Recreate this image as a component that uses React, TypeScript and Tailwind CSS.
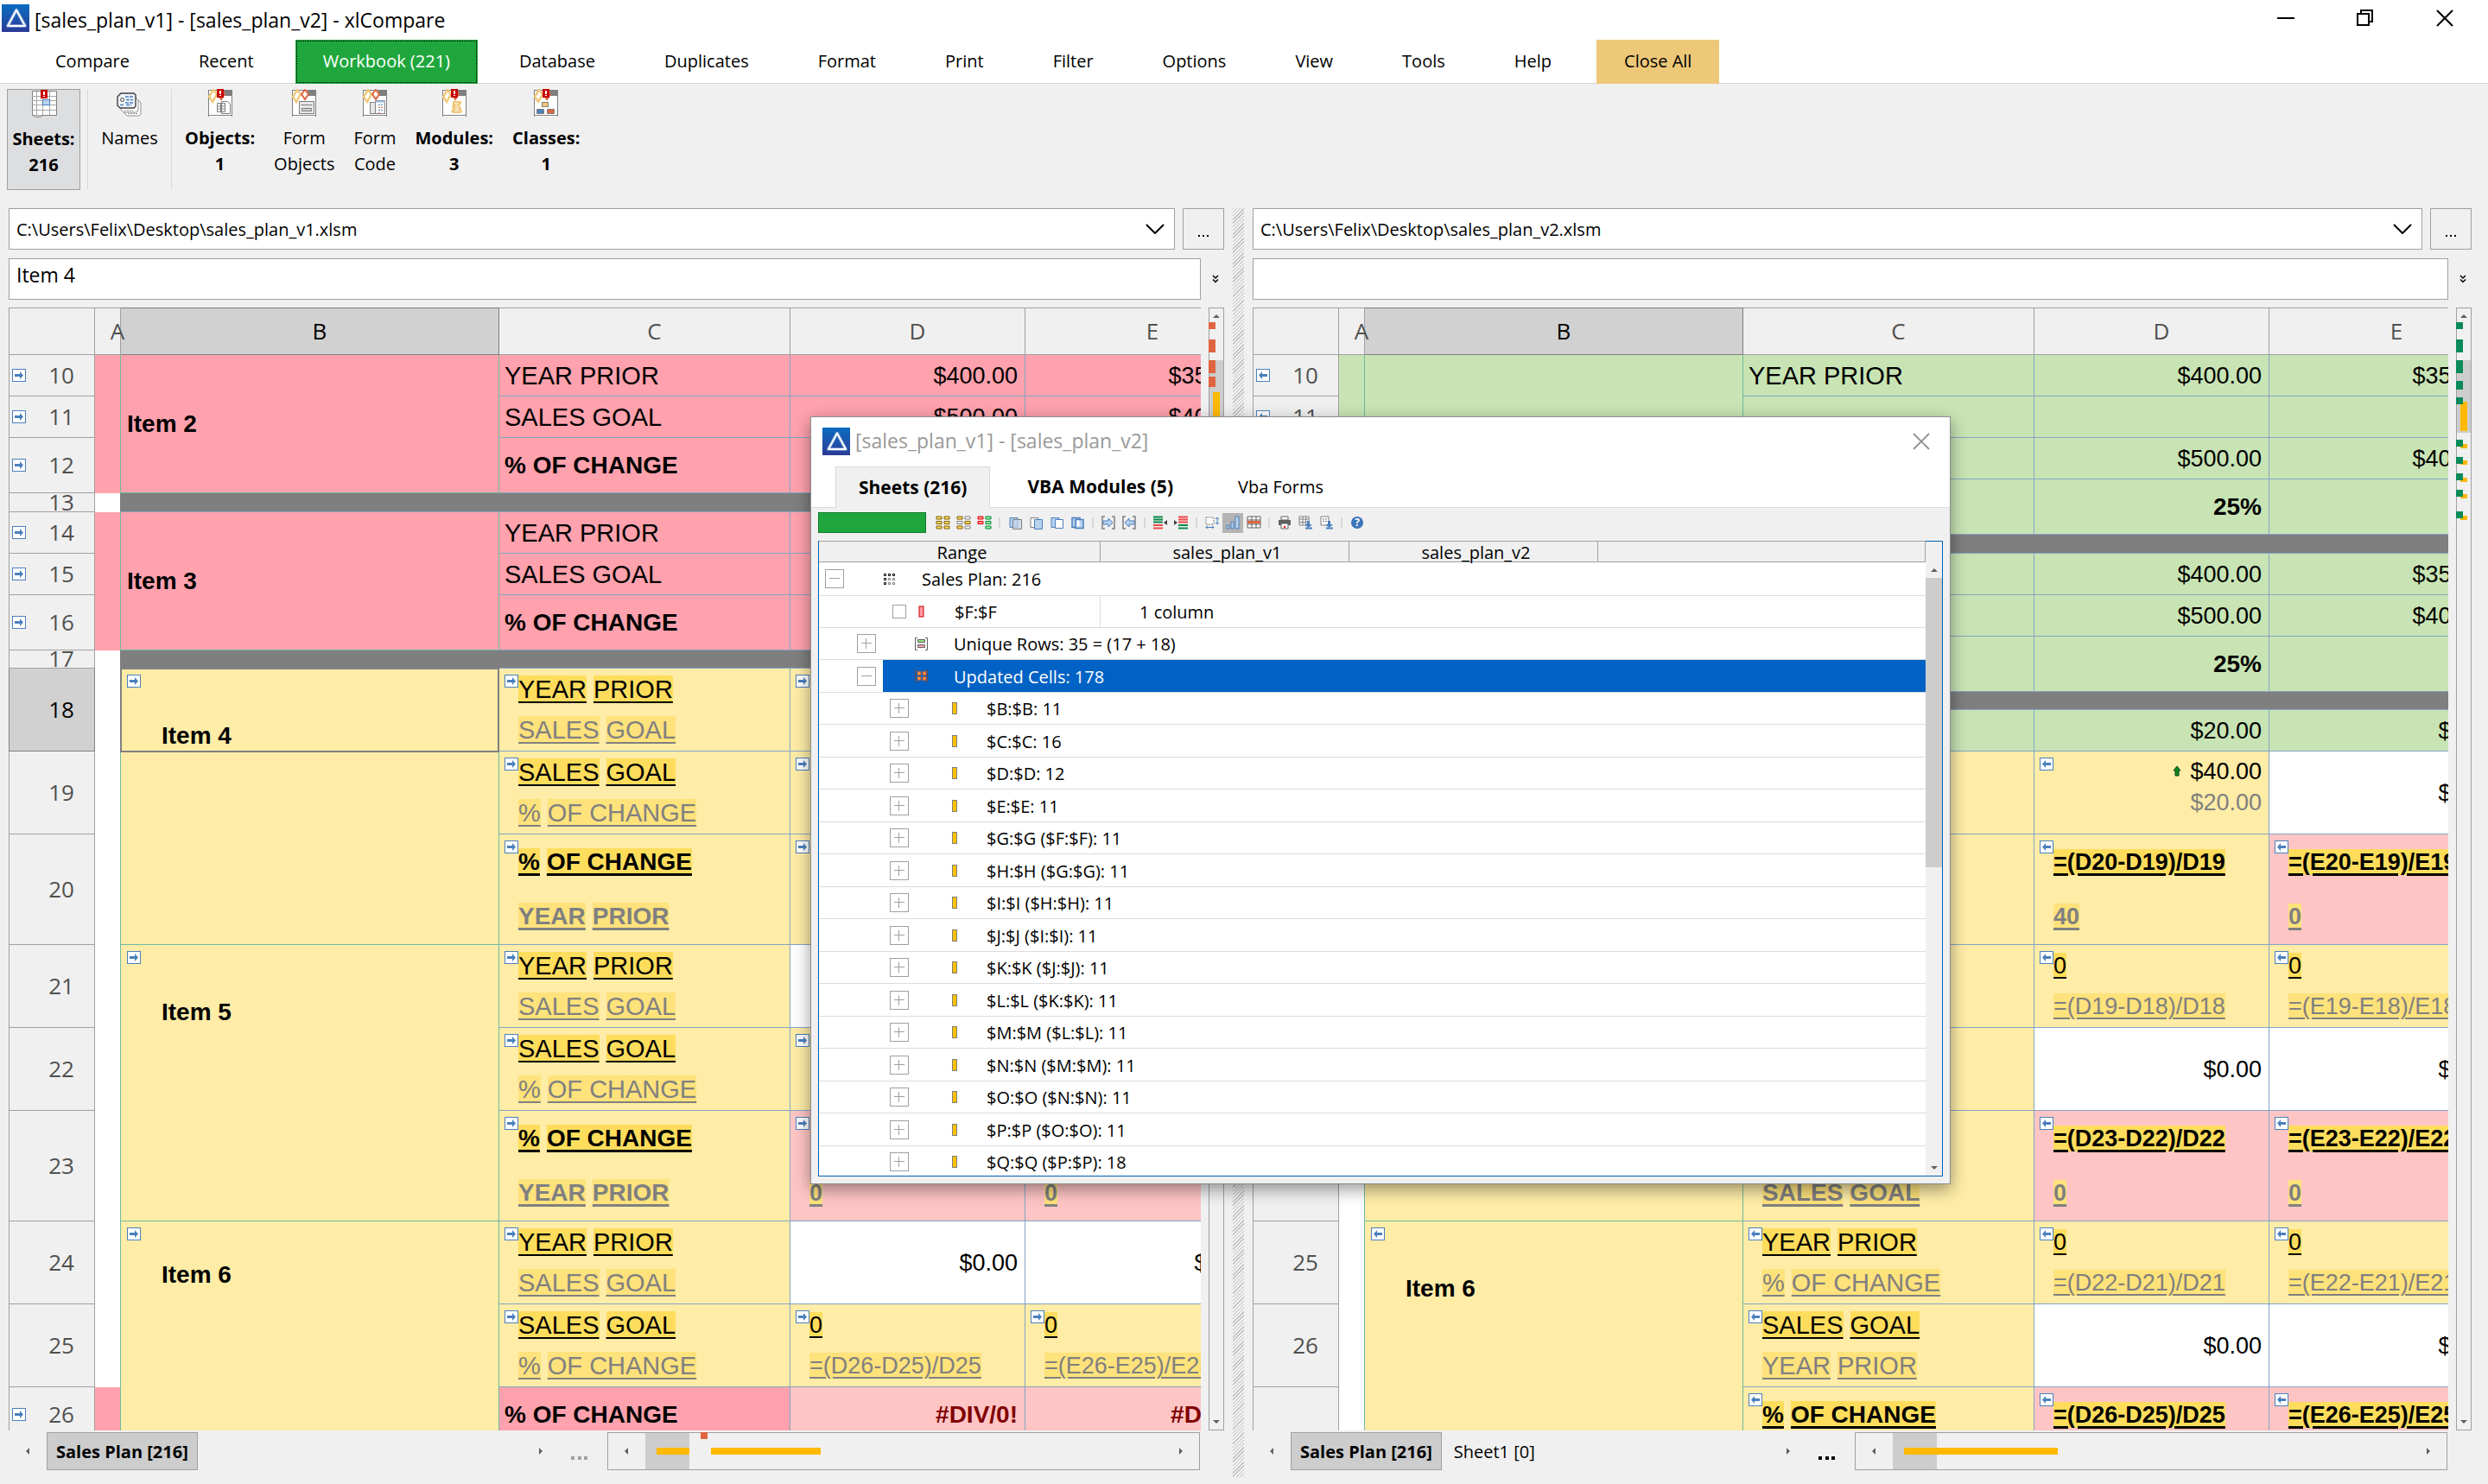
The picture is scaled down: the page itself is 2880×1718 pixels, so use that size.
import React, { useState } from 'react';
import clsx from 'clsx';

type Fill = 'pink' | 'rose' | 'yellow' | 'green' | 'white' | 'gray';
type Side = 'left' | 'right';

interface Cell {
  bg: Fill;
  text?: string;
  old?: string;
  diff?: boolean;
  bold?: boolean;
  error?: boolean;
  trend?: boolean;
}

interface MergedCell {
  bg: Fill;
  rows: number;
  text?: string;
  indent?: 'middle' | 'short' | 'long';
  mark?: boolean;
  selected?: boolean;
}

interface Row {
  id: number;
  size: 's' | 'm' | 'l' | 'xl' | 'bar' | 'thin';
  a: Fill;
  marked?: boolean;
  active?: boolean;
  b?: MergedCell;
  cells?: Cell[];
}

const FILL: Record<Fill, string> = {
  pink: 'bg-[#ffa2ad]',
  rose: 'bg-[#ffc5c5]',
  yellow: 'bg-[#feeca7]',
  green: 'bg-[#c8e4b4]',
  white: 'bg-white',
  gray: 'bg-[#7f7f7f]',
};

const ROW_SIZE: Record<Row['size'], string> = {
  s: 'h-[48px]',
  m: 'h-[64px]',
  l: 'h-[96px]',
  xl: 'h-[128px]',
  bar: 'h-[22px]',
  thin: 'h-[21px]',
};

const COLUMNS = ['A', 'B', 'C', 'D', 'E'];

const plain = (bg: Fill, text = '', bold = false): Cell => ({ bg, text, bold });
const diff = (text: string, old: string, bold = false, bg: Fill = 'yellow'): Cell => ({ bg, text, old, bold, diff: true });

const LEFT_ROWS: Row[] = [
  { id: 10, size: 's', a: 'pink', marked: true, b: { bg: 'pink', rows: 3, text: 'Item 2', indent: 'middle' }, cells: [plain('pink', 'YEAR PRIOR'), plain('pink', '$400.00'), plain('pink', '$350.00')] },
  { id: 11, size: 's', a: 'pink', marked: true, cells: [plain('pink', 'SALES GOAL'), plain('pink', '$500.00'), plain('pink', '$400.00')] },
  { id: 12, size: 'm', a: 'pink', marked: true, cells: [plain('pink', '% OF CHANGE', true), plain('pink'), plain('pink')] },
  { id: 13, size: 'bar', a: 'white' },
  { id: 14, size: 's', a: 'pink', marked: true, b: { bg: 'pink', rows: 3, text: 'Item 3', indent: 'middle' }, cells: [plain('pink', 'YEAR PRIOR'), plain('pink'), plain('pink')] },
  { id: 15, size: 's', a: 'pink', marked: true, cells: [plain('pink', 'SALES GOAL'), plain('pink'), plain('pink')] },
  { id: 16, size: 'm', a: 'pink', marked: true, cells: [plain('pink', '% OF CHANGE', true), plain('pink'), plain('pink')] },
  { id: 17, size: 'thin', a: 'white' },
  { id: 18, size: 'l', a: 'white', active: true, b: { bg: 'yellow', rows: 3, text: 'Item 4', indent: 'long', mark: true, selected: true }, cells: [diff('YEAR|PRIOR', 'SALES|GOAL'), diff('', ''), diff('', '')] },
  { id: 19, size: 'l', a: 'white', cells: [diff('SALES|GOAL', '%|OF CHANGE'), diff('', ''), diff('', '')] },
  { id: 20, size: 'xl', a: 'white', cells: [diff('%|OF CHANGE', 'YEAR|PRIOR', true), diff('', '', true), diff('', '', true)] },
  { id: 21, size: 'l', a: 'white', b: { bg: 'yellow', rows: 3, text: 'Item 5', indent: 'long', mark: true }, cells: [diff('YEAR|PRIOR', 'SALES|GOAL'), plain('white'), plain('white')] },
  { id: 22, size: 'l', a: 'white', cells: [diff('SALES|GOAL', '%|OF CHANGE'), diff('', ''), diff('', '')] },
  { id: 23, size: 'xl', a: 'white', cells: [diff('%|OF CHANGE', 'YEAR|PRIOR', true), diff('', '0', true, 'rose'), diff('', '0', true, 'rose')] },
  { id: 24, size: 'l', a: 'white', b: { bg: 'yellow', rows: 3, text: 'Item 6', indent: 'short', mark: true }, cells: [diff('YEAR|PRIOR', 'SALES|GOAL'), plain('white', '$0.00'), plain('white', '$0.00')] },
  { id: 25, size: 'l', a: 'white', cells: [diff('SALES|GOAL', '%|OF CHANGE'), diff('0', '=(D26-D25)/D25'), diff('0', '=(E26-E25)/E25')] },
  { id: 26, size: 'm', a: 'pink', marked: true, cells: [plain('pink', '% OF CHANGE', true), { bg: 'rose', text: '#DIV/0!', bold: true, error: true }, { bg: 'rose', text: '#DIV/0!', bold: true, error: true }] },
];

const RIGHT_ROWS: Row[] = [
  { id: 10, size: 's', a: 'green', marked: true, b: { bg: 'green', rows: 4 }, cells: [plain('green', 'YEAR PRIOR'), plain('green', '$400.00'), plain('green', '$350.00')] },
  { id: 11, size: 's', a: 'green', marked: true, cells: [plain('green'), plain('green'), plain('green')] },
  { id: 12, size: 's', a: 'green', marked: true, cells: [plain('green'), plain('green', '$500.00'), plain('green', '$400.00')] },
  { id: 13, size: 'm', a: 'green', marked: true, cells: [plain('green'), plain('green', '25%', true), plain('green')] },
  { id: 14, size: 'bar', a: 'white' },
  { id: 15, size: 's', a: 'green', marked: true, b: { bg: 'green', rows: 3 }, cells: [plain('green'), plain('green', '$400.00'), plain('green', '$350.00')] },
  { id: 16, size: 's', a: 'green', marked: true, cells: [plain('green'), plain('green', '$500.00'), plain('green', '$400.00')] },
  { id: 17, size: 'm', a: 'green', marked: true, cells: [plain('green'), plain('green', '25%', true), plain('green')] },
  { id: 18, size: 'thin', a: 'white' },
  { id: 19, size: 's', a: 'green', marked: true, b: { bg: 'green', rows: 1 }, cells: [plain('green'), plain('green', '$20.00'), plain('green', '$5.00')] },
  { id: 20, size: 'l', a: 'white', b: { bg: 'yellow', rows: 2 }, cells: [plain('yellow'), { bg: 'yellow', text: '$40.00', old: '$20.00', trend: true }, plain('white', '$5.00')] },
  { id: 21, size: 'xl', a: 'white', cells: [plain('yellow'), diff('=(D20-D19)/D19', '40', true), diff('=(E20-E19)/E19', '0', true, 'rose')] },
  { id: 22, size: 'l', a: 'white', b: { bg: 'yellow', rows: 3 }, cells: [plain('yellow'), diff('0', '=(D19-D18)/D18'), diff('0', '=(E19-E18)/E18')] },
  { id: 23, size: 'l', a: 'white', cells: [plain('yellow'), plain('white', '$0.00'), plain('white', '$0.00')] },
  { id: 24, size: 'xl', a: 'white', cells: [diff('', 'SALES|GOAL', true), diff('=(D23-D22)/D22', '0', true, 'rose'), diff('=(E23-E22)/E22', '0', true, 'rose')] },
  { id: 25, size: 'l', a: 'white', b: { bg: 'yellow', rows: 3, text: 'Item 6', indent: 'long', mark: true }, cells: [diff('YEAR|PRIOR', '%|OF CHANGE'), diff('0', '=(D22-D21)/D21'), diff('0', '=(E22-E21)/E21')] },
  { id: 26, size: 'l', a: 'white', cells: [diff('SALES|GOAL', 'YEAR|PRIOR'), plain('white', '$0.00'), plain('white', '$0.00')] },
  { id: 27, size: 'xl', a: 'white', cells: [diff('%|OF CHANGE', '', true), diff('=(D26-D25)/D25', '', true, 'rose'), diff('=(E26-E25)/E25', '', true, 'rose')] },
];

const MENU = ['Compare', 'Recent', 'Workbook (221)', 'Database', 'Duplicates', 'Format', 'Print', 'Filter', 'Options', 'View', 'Tools', 'Help', 'Close All'];

const UPDATED_COLUMNS = [
  '$B:$B: 11', '$C:$C: 16', '$D:$D: 12', '$E:$E: 11', '$G:$G ($F:$F): 11', '$H:$H ($G:$G): 11', '$I:$I ($H:$H): 11',
  '$J:$J ($I:$I): 11', '$K:$K ($J:$J): 11', '$L:$L ($K:$K): 11', '$M:$M ($L:$L): 11', '$N:$N ($M:$M): 11',
  '$O:$O ($N:$N): 11', '$P:$P ($O:$O): 11', '$Q:$Q ($P:$P): 18',
];

function Logo() {
  return (
    <svg viewBox="0 0 32 32" className="size-8 shrink-0" aria-hidden="true">
      <defs>
        <linearGradient id="logo" x1="0" y1="0" x2="0" y2="1">
          <stop offset="0" stopColor="#0a6cc0" />
          <stop offset="1" stopColor="#2b3b98" />
        </linearGradient>
      </defs>
      <rect width="32" height="32" fill="url(#logo)" />
      <path d="M17 6.5 L27 25 H7 Z" fill="none" stroke="#8fb4e0" strokeWidth="4" strokeLinejoin="round" opacity=".6" />
      <path d="M17 6.5 L27 25 H7 Z" fill="none" stroke="#fff" strokeWidth="2" strokeLinejoin="round" />
    </svg>
  );
}

function SyncMark({ side }: { side: Side }) {
  return (
    <svg viewBox="0 0 16 15" className="block h-[15px] w-4" aria-hidden="true">
      <rect x=".5" y=".5" width="15" height="14" fill="#fff" stroke="#4a80bd" />
      <path d={side === 'left' ? 'M3 6h6V3l4 4.5L9 12V9H3z' : 'M13 6H7V3L3 7.5 7 12V9h6z'} fill="#4a80bd" />
    </svg>
  );
}

function Triangle({ dir }: { dir: 'up' | 'down' | 'left' | 'right' }) {
  const paths = { up: 'M1 7h8L5 3z', down: 'M1 3h8L5 7z', left: 'M7 1v8L3 5z', right: 'M3 1v8l4-4z' };
  return (
    <svg viewBox="0 0 10 10" className="size-2.5" aria-hidden="true">
      <path d={paths[dir]} fill="#606060" />
    </svg>
  );
}

function Alert({ x }: { x: number }) {
  return (
    <g>
      <rect x={x} y="0" width="8" height="10" fill="#c80000" />
      <path d={`M${x + 3} 2h2v4h-2zM${x + 3} 7h2v1h-2z`} fill="#fff" />
    </g>
  );
}

// Window page with the two compare diamonds, shared by the VBA buttons
function PageBase({ children, alert }: { children: React.ReactNode; alert?: boolean }) {
  return (
    <svg viewBox="0 0 32 32" className="size-8" aria-hidden="true">
      <rect x="2.5" y="1.5" width="27" height="33" fill="#fff" stroke="#7f7f7f" />
      <path d="M20 1h10v7H20z" fill="#7f7f7f" />
      <path d="M2.5 30.500h27" stroke="#7f7f7f" />
      <path d="M8 1l4 5-5 9-4-6z" fill="#fff" stroke="#f0c87a" strokeWidth="2.4" />
      <path d="M17 1l4 5-4 6-4-6z" fill="#fff" stroke="#df6540" strokeWidth="2" />
      {children}
      {alert ? <Alert x={12} /> : null}
    </svg>
  );
}

function SheetsIcon() {
  return (
    <svg viewBox="0 0 32 32" className="size-8" aria-hidden="true">
      <path d="M2.5 1.5h28v28h-28z" fill="#fff" stroke="#7f7f7f" />
      <path d="M7.5 2v27M14.5 2v27M22.5 2v27M2 7.5h28M2 12.5h28M2 17.5h28M2 23.5h28" stroke="#a6a6a6" fill="none" />
      <rect x="14.5" y="11.5" width="8" height="6" fill="#b9d2ee" stroke="#4a80bd" />
      <path d="M4 29.500v.5c0 2 8 2 10 0v-.5" fill="#dcdcdc" stroke="#7f7f7f" />
      <Alert x={12} />
    </svg>
  );
}

function NamesIcon() {
  return (
    <svg viewBox="0 0 32 32" className="size-8" aria-hidden="true">
      <path d="M12 13h14l3 3v13l-2 2H13l-3-3z" fill="#fff" stroke="#8c8c8c" />
      <path d="M9 10h14l3 3v12l-2 2H9l-3-3z" fill="#fff" stroke="#8c8c8c" />
      <path d="M6 5h15l2 2v13l-2 2H5l-3-3V9z" fill="#eef3f8" stroke="#404040" strokeWidth="1.4" />
      <circle cx="7.5" cy="12.5" r="2" fill="#fff" stroke="#404040" />
      <path d="M11 9h9M12 12.5h8M11 16h9M5 18.5h4M12 18.5h6" stroke="#4a80bd" strokeWidth="1.3" strokeDasharray="4 1" />
      <path d="M10 25h10M14 28.5h11" stroke="#8c8c8c" strokeDasharray="2 1" />
    </svg>
  );
}

const RIBBON = [
  {
    lines: ['Objects:', '1'],
    bold: true,
    icon: (
      <PageBase alert>
        <path d="M17.5 14.5h7l3 3v11h-10z" fill="#fff" stroke="#7f7f7f" />
        <path d="M12.5 16.5h9v10h-9zM12.5 20h9M12.5 23h9M16.5 16.5v10" fill="none" stroke="#7f7f7f" />
      </PageBase>
    ),
  },
  {
    lines: ['Form', 'Objects'],
    icon: (
      <PageBase>
        <rect x="10.5" y="14.5" width="17" height="14" fill="#e6e6e6" stroke="#7f7f7f" />
        <path d="M12.5 18.5h13M13.5 22.5h11v3h-11z" fill="#ccc" stroke="#7f7f7f" />
      </PageBase>
    ),
  },
  {
    lines: ['Form', 'Code'],
    icon: (
      <PageBase>
        <rect x="10.5" y="15.5" width="9" height="13" fill="#e6e6e6" stroke="#7f7f7f" />
        <rect x="16.5" y="13.5" width="11" height="15" fill="#fff" stroke="#7f7f7f" />
        <path d="M16 14.5h12" stroke="#9db9dc" strokeWidth="2" />
        <path d="M20 18.500h5M20 24.500h5" stroke="#4a80bd" strokeDasharray="2 1" />
        <path d="M20 21.500h5M20 27h3" stroke="#df6540" strokeDasharray="2 1" />
      </PageBase>
    ),
  },
  {
    lines: ['Modules:', '3'],
    bold: true,
    icon: (
      <PageBase alert>
        <path d="M14 14h10v3l-2 2 2 4 1 4-2 1H14l-2-2 2-3-1-4 1-1z" fill="#f0c87a" />
        <path d="M16 17h5M17 20h3v3h-3M16 25h6" stroke="#fff" fill="none" />
      </PageBase>
    ),
  },
  {
    lines: ['Classes:', '1'],
    bold: true,
    icon: (
      <PageBase alert>
        <rect x="11.5" y="15.5" width="7" height="5" fill="#f0c87a" stroke="#7f7f7f" />
        <path d="M5.5 23.5h8v5h-8z" fill="#4a80bd" stroke="#7f7f7f" />
        <path d="M17.5 23.5h8v5h-8z" fill="#df6540" stroke="#7f7f7f" />
      </PageBase>
    ),
  },
];

function RibbonLabel({ lines, bold }: { lines: string[]; bold?: boolean }) {
  return (
    <span className={clsx('mt-2.5 flex flex-col text-center text-[20px] leading-[30px]', bold && 'font-bold')}>
      {lines.map(line => <span key={line}>{line}</span>)}
    </span>
  );
}

function TitleBar() {
  return (
    <header className="flex h-[46px] shrink-0 items-center bg-white pr-1 pb-1 pl-0.5">
      <Logo />
      <h1 className="ml-1.5 flex-1 pt-1 text-[23px]">[sales_plan_v1] - [sales_plan_v2] - xlCompare</h1>
      <button aria-label="Minimize" className="flex h-full w-[92px] items-center justify-center">
        <svg viewBox="0 0 20 20" className="size-5" fill="none" stroke="#000" strokeWidth="2"><path d="M0 10h20" /></svg>
      </button>
      <button aria-label="Restore" className="flex h-full w-[92px] items-center justify-center">
        <svg viewBox="0 0 20 20" className="size-5" fill="none" stroke="#000" strokeWidth="2"><path d="M1 5h13v13H1zM5 5V1h13v13h-4" /></svg>
      </button>
      <button aria-label="Close" className="flex h-full w-[92px] items-center justify-center">
        <svg viewBox="0 0 20 20" className="size-5" fill="none" stroke="#000" strokeWidth="2"><path d="M1 1l18 18M19 1L1 19" /></svg>
      </button>
    </header>
  );
}

function MenuBar() {
  const [active, setActive] = useState('Workbook (221)');
  return (
    <nav className="flex h-[51px] shrink-0 gap-4 border-b border-[#d6d6d6] bg-white pl-8">
      {MENU.map(item => (
        <button
          key={item}
          onClick={() => setActive(item)}
          className={clsx(
            '-mb-px px-8 pb-0.5 text-[20px]',
            item === active && 'bg-[#1fa73e] text-white outline-1 -outline-offset-2 outline-dotted outline-black',
            item === 'Close All' && 'ml-1 bg-[#eec879]',
          )}
        >
          {item}
        </button>
      ))}
    </nav>
  );
}

function Ribbon() {
  return (
    <div className="flex h-[144px] shrink-0 pt-1.5 pl-2">
      <button className="flex h-[117px] w-[85px] flex-col items-center border border-[#a0a0a0] bg-[#dddee0]">
        <SheetsIcon />
        <RibbonLabel lines={['Sheets:', '216']} bold />
      </button>
      <div className="ml-2 h-[116px] border-l border-[#dadada]" />
      <button className="flex w-24 flex-col items-center">
        <NamesIcon />
        <RibbonLabel lines={['Names']} />
      </button>
      <div className="mr-1 h-[116px] border-l border-[#dadada]" />
      {RIBBON.map(({ lines, bold, icon }) => (
        <button key={lines.join(' ')} className="flex flex-col items-center px-[11px]">
          {icon}
          <RibbonLabel lines={lines} bold={bold} />
        </button>
      ))}
    </div>
  );
}

function DiffLine({ text, bold, old, label }: { text: string; bold?: boolean; old?: boolean; label?: boolean }) {
  const height = bold ? (old ? 'leading-[62px]' : 'leading-[64px]') : (old ? 'leading-[46px]' : 'leading-[48px]');
  const size = label ? (bold ? 'text-[28px]' : 'text-[29px]') : 'text-[27px]';
  return (
    <div className={clsx('flex gap-2', size, height, bold && 'font-bold', old && 'text-[#808080]')}>
      {text ?
        text.split('|').map(word => (
          <span key={word}>
            <span
              className={clsx('underline underline-offset-4', bold ? 'decoration-3' : 'decoration-2', old ? 'bg-[#fee27b]' : 'bg-[#fedd5c]')}
            >
              {word}
            </span>
          </span>
        )) :
        <span>&nbsp;</span>}
    </div>
  );
}

function DataCell({ cell, side, label }: { cell: Cell; side: Side; label?: boolean }) {
  const box = clsx('relative border-r border-b border-[#84a5c5] p-0 whitespace-nowrap', FILL[cell.bg]);

  if (cell.diff) {
    return (
      <td className={clsx(box, 'pl-[22px] align-top')}>
        <span className="absolute top-[7px] left-1.5"><SyncMark side={side} /></span>
        <DiffLine text={cell.text || ''} bold={cell.bold} label={label} />
        <DiffLine text={cell.old || ''} bold={cell.bold} label={label} old />
      </td>
    );
  }

  if (cell.trend) {
    return (
      <td className={clsx(box, 'pt-[5px] pr-2 text-right align-top text-[27px] leading-[36px]')}>
        <span className="absolute top-[7px] left-1.5"><SyncMark side={side} /></span>
        <div className="flex items-center justify-end gap-2.5">
          <svg viewBox="0 0 10 14" className="h-3.5 w-2.5" aria-hidden="true"><path d="M5 1l4 5H7v6H3V6H1z" fill="#0a8a1e" stroke="#06451a" /></svg>
          {cell.text}
        </div>
        <div className="text-[#808080]">{cell.old}</div>
      </td>
    );
  }

  return (
    <td
      className={clsx(
        box,
        'leading-8',
        label ? 'pl-1.5 text-left' : 'pr-2 text-right',
        cell.bold ? 'text-[28px] font-bold' : (label ? 'text-[29px]' : 'text-[27px]'),
        cell.error && 'text-[#800000]',
      )}
    >
      {cell.text}
    </td>
  );
}

function ItemCell({ cell, side }: { cell: MergedCell; side: Side }) {
  return (
    <td
      rowSpan={cell.rows}
      className={clsx(
        'relative border-r border-b border-[#6dbb9f] p-0 text-left text-[28px] font-bold leading-8',
        FILL[cell.bg],
        cell.indent === 'middle' && 'pl-[7px] align-middle',
        cell.indent === 'short' && 'pt-[46px] pl-[47px] align-top',
        cell.indent === 'long' && 'pt-[62px] pl-[47px] align-top',
      )}
    >
      {cell.selected ? <div className="absolute -top-px -right-px -left-px h-[98px] border-2 border-[#808080]" /> : null}
      {cell.mark ? <span className="absolute top-[7px] left-[7px]"><SyncMark side={side} /></span> : null}
      {cell.text}
    </td>
  );
}

function Sheet({ rows, side }: { rows: Row[]; side: Side }) {
  return (
    <table className="w-[1449px] table-fixed border-separate border-spacing-0 font-['Liberation_Sans',sans-serif]">
      <colgroup>
        <col className="w-[100px]" />
        <col className="w-[30px]" />
        <col className="w-[438px]" />
        <col className="w-[337px]" />
        <col className="w-[272px]" />
        <col className="w-[272px]" />
      </colgroup>
      <thead className="font-['Open_Sans','Noto_Sans',sans-serif] text-[26px]">
        <tr className="h-[55px]">
          <th className="border border-[#a0a0a0] p-0" />
          {COLUMNS.map(column => (
            <th
              key={column}
              className={clsx(
                'border-t border-r border-b p-0 font-normal',
                column === 'B' ? 'border-[#808080] bg-[#d1d1d1] text-black' : 'border-[#a0a0a0] text-[#505050]',
              )}
            >
              <div className="relative z-10 flex justify-center pl-[23px]">{column}</div>
            </th>
          ))}
        </tr>
      </thead>
      <tbody>
        {rows.map(row => (
          <tr key={row.id} className={ROW_SIZE[row.size]}>
            <th
              className={clsx(
                "relative border-r border-b border-l p-0 font-['Open_Sans','Noto_Sans',sans-serif] text-[26px] font-normal",
                row.active ? 'border-[#808080] bg-[#d1d1d1] text-black' : 'border-[#a0a0a0] text-[#505050]',
              )}
            >
              {row.marked ? <span className="absolute inset-y-0 left-[3px] flex items-center"><SyncMark side={side} /></span> : null}
              <div className={clsx('pl-[22px] text-center', row.cells ? 'pb-0.5 leading-8' : 'h-5 overflow-hidden leading-[18px]')}>{row.id}</div>
            </th>
            <td className={clsx('border-r p-0', FILL[row.a], row.cells ? 'border-[#6dbb9f]' : 'border-[#7f7f7f]')} />
            {row.b ? <ItemCell cell={row.b} side={side} /> : null}
            {row.cells ?
              row.cells.map((cell, index) => <DataCell key={index} cell={cell} side={side} label={index === 0} />) :
              <td colSpan={4} className="border-b border-[#84a5c5] bg-[#7f7f7f] p-0" />}
          </tr>
        ))}
      </tbody>
    </table>
  );
}

// Scroll bar with the overview of changed rows drawn over it
function OverviewBar({ side }: { side: Side }) {
  const primary = side === 'left' ? '#df6540' : '#0a8a5a';
  const blocks = side === 'left' ?
    [[17, 8], [37, 15], [61, 15], [80, 12]] :
    [[17, 8], [37, 15], [61, 15], [85, 10], [104, 8], [153, 8], [173, 8], [192, 8], [211, 8], [236, 8]];
  const updates = side === 'left' ? [[98, 46]] : [[109, 34], [158, 5], [177, 5], [197, 5], [216, 5], [241, 5]];

  return (
    <div className="relative ml-[9px] flex w-[18px] shrink-0 flex-col items-center justify-between border border-[#a0a0a0] py-1">
      <Triangle dir="up" />
      <Triangle dir="down" />
      <svg viewBox="0 0 18 260" className="absolute -top-px -left-px h-[260px] w-[18px]" aria-hidden="true">
        <rect x="1" y="61" width="16" height="84" fill="#cdcdcd" />
        {updates.map(([y, h]) => <rect key={y} x="5" y={y} width="8" height={h} fill="#ffb900" />)}
        {blocks.map(([y, h]) => <rect key={y} x="0" y={y} width="8" height={h} fill={primary} />)}
      </svg>
    </div>
  );
}

function SheetStrip({ side }: { side: Side }) {
  return (
    <div className="mr-7 flex h-[62px] shrink-0 pt-0.5">
      <div className="flex h-11 flex-1 items-center text-[20px]">
        <button aria-label="Previous sheets" className="flex w-11 justify-center"><Triangle dir="left" /></button>
        <button className="h-11 border border-[#a0a0a0] bg-[#cdcdcd] px-2.5 pt-0.5 font-bold">Sales Plan [216]</button>
        {side === 'right' ? <button className="h-11 px-3.5 pt-0.5">Sheet1 [0]</button> : null}
        <button aria-label="Next sheets" className="mr-[30px] ml-auto"><Triangle dir="right" /></button>
        <button aria-label="All sheets" className="mt-4 mr-[22px]">
          <svg viewBox="0 0 20 6" className={clsx('h-1.5 w-5', side === 'left' ? 'fill-[#a0a0a0]' : 'fill-black')}>
            <path d="M0 1h4v4H0zM8 1h4v4H8zM15 1h4v4h-4z" />
          </svg>
        </button>
      </div>
      <div className="relative flex h-11 w-[686px] items-center justify-between border border-[#a0a0a0] px-4">
        <Triangle dir="left" />
        <Triangle dir="right" />
        <svg viewBox="0 0 260 44" className="absolute -top-px left-[43px] h-11 w-[260px]" aria-hidden="true">
          <rect x="0" y="1" width="51" height="42" fill="#cdcdcd" />
          {side === 'left' ?
            <path d="M13 18h38v8H13zM76 18h127v8H76z" fill="#ffb900" /> :
            <path d="M13 18h178v8H13z" fill="#ffb900" />}
          {side === 'left' ? <path d="M64 0h8v8h-8z" fill="#df6540" /> : null}
        </svg>
      </div>
    </div>
  );
}

function Pane({ side, rows, path, value }: { side: Side; rows: Row[]; path: string; value: string }) {
  return (
    <section className={clsx('flex min-w-0 flex-col', side === 'left' ? 'flex-1 pr-2.5 pl-2.5' : 'w-1/2 pr-[19px] pl-2.5')}>
      <div className="flex h-12 shrink-0 gap-[9px]">
        <div className="relative flex-1">
          <select aria-label="Workbook path" className="size-full appearance-none border border-[#a0a0a0] bg-white pt-0.5 pl-2 text-[20px]">
            <option>{path}</option>
          </select>
          <svg viewBox="0 0 22 12" className="pointer-events-none absolute top-[18px] right-3 h-3 w-[22px]" fill="none" stroke="#000" strokeWidth="2" aria-hidden="true">
            <path d="M1 1l10 10L21 1" />
          </svg>
        </div>
        <button aria-label="Browse" className="flex w-12 items-center justify-center border border-[#a0a0a0] pt-4">
          <svg viewBox="0 0 14 4" className="h-1 w-3.5"><path d="M1 1h2v2H1zM6 1h2v2H6zM11 1h2v2h-2z" /></svg>
        </button>
      </div>
      <div className="mt-2.5 flex h-12 shrink-0">
        <textarea aria-label="Cell value" defaultValue={value} className="block h-12 flex-1 resize-none overflow-hidden border border-[#a0a0a0] bg-white pt-0.5 pl-2 text-[23px] leading-8" />
        <button aria-label="Expand" className="flex w-[27px] items-center justify-end pr-1.5">
          <svg viewBox="0 0 8 10" className="h-2.5 w-2" fill="none" stroke="#000" strokeWidth="1.5"><path d="M1 1l3 3 3-3M1 5.5l3 3 3-3" /></svg>
        </button>
      </div>
      <div className="mt-[9px] flex min-h-0 flex-1">
        <div className="min-w-0 flex-1 overflow-hidden"><Sheet rows={rows} side={side} /></div>
        <OverviewBar side={side} />
      </div>
      <SheetStrip side={side} />
    </section>
  );
}

// Sixteen pixel drawings of the dialog tool bar, one array per group
const TOOLS: { label: string; art: React.ReactNode; pressed?: boolean }[][] = [
  [
    { label: 'All ranges', art: <path d="M1 1h6v3H1zM10 1h6v3h-6zM1 6.5h6v3H1zM10 6.5h6v3h-6zM1 12h6v3H1zM10 12h6v3h-6z" fill="#ffd966" stroke="#7f6000" /> },
    { label: 'Changed ranges', art: <><path d="M1 1h6v3H1zM10 6.5h6v3h-6zM1 12h6v3H1z" fill="#ffd966" stroke="#7f6000" /><path d="M10 1h6v3h-6zM1 6.5h6v3H1zM10 12h6v3h-6z" fill="#fff" stroke="#7f7f7f" /></> },
    { label: 'Unique ranges', art: <><path d="M1 1h6v3H1zM1 6.5h6v3H1z" fill="#ff9090" stroke="#e00000" /><path d="M10 1h6v3h-6zM10 6.5h6v3h-6zM10 12h6v3h-6z" fill="#90ff90" stroke="#008040" /></> },
  ],
  [
    { label: 'Union', art: <><path d="M2 2.5h9v11H2z" fill="#b9d2ee" stroke="#4a80bd" /><path d="M5.5 4.5h10v11h-10z" fill="#c4d4e6" fillOpacity=".7" stroke="#7f7f7f" /></> },
    { label: 'Second only', art: <><path d="M2 2.5h9v11H2z" fill="#fff" stroke="#7f7f7f" /><path d="M6.5 4.5h9v11h-9z" fill="#b9d2ee" stroke="#4a80bd" /></> },
    { label: 'First only', art: <><path d="M2 2.5h9v11H2z" fill="#b9d2ee" stroke="#4a80bd" /><path d="M6.5 4.5h9v10h-9z" fill="#fff" stroke="#4a80bd" /></> },
    { label: 'Intersection', art: <><path d="M2 2.5h9v11H2z" fill="#b9d2ee" stroke="#4a80bd" strokeWidth="1.5" /><path d="M6 4.5h9v10H6z" fill="#b9d2ee" stroke="#4a80bd" strokeWidth="1.5" /><path d="M7.5 5.5h3v7h-3z" fill="#fff" /></> },
  ],
  [
    { label: 'Merge right', art: <><path d="M4 1H1v14h3M12 1h3v14h-3" fill="none" stroke="#7f7f7f" strokeWidth="1.5" /><path d="M2 6h6V3l5 5-5 5v-3H2z" fill="#b9d2ee" stroke="#4a80bd" /></> },
    { label: 'Merge left', art: <><path d="M4 1H1v14h3M12 1h3v14h-3" fill="none" stroke="#7f7f7f" strokeWidth="1.5" /><path d="M14 6H8V3L3 8l5 5v-3h6z" fill="#b9d2ee" stroke="#4a80bd" /></> },
  ],
  [
    { label: 'Next', art: <><path d="M0 1.5h11M0 4.5h11M0 7.5h11" stroke="#0a8a4a" strokeWidth="2" /><path d="M0 11h11M0 14.5h11" stroke="#f04848" strokeWidth="2" /><path d="M16 5v6l-4-3z" fill="#404040" /></> },
    { label: 'Previous', art: <><path d="M5 1.5h11M5 4.5h11M5 7.5h11" stroke="#f04848" strokeWidth="2" /><path d="M5 11h11M5 14.5h11" stroke="#0a8a4a" strokeWidth="2" /><path d="M0 5v6l4-3z" fill="#404040" /></> },
  ],
  [
    { label: 'Fit size', art: <><path d="M1 2h9v8H1z" fill="#fff" stroke="#7f7f7f" strokeDasharray="2 1" /><path d="M14 2v8M12 4l2-2 2 2M12 8l2 2 2-2M1 13.5h9M3 11.5l-2 2 2 2M8 11.5l2 2-2 2" fill="none" stroke="#4a80bd" /></> },
    { label: 'Statistics', pressed: true, art: <path d="M1 11h3v4H1zM6 7h3v8H6zM11 1h4v14h-4z" fill="#b9d2ee" stroke="#4a80bd" /> },
    { label: 'Grid', art: <><path d="M1 1h15v13H1zM1 5h15M1 10h15M6 1v13M11 1v13" fill="#fff" stroke="#606060" /><path d="M1 6h15v3H1z" fill="#df6540" /></> },
  ],
  [
    { label: 'Print', art: <><path d="M4 1h8v4H4z" fill="#fff" stroke="#606060" /><path d="M1 5h14v6H1z" fill="#606060" /><path d="M4 9h8v6H4z" fill="#fff" stroke="#606060" /><path d="M7 12h2v2H7z" fill="red" /></> },
    { label: 'Export to Excel', art: <><path d="M1 1h11v10H1zM1 4h11M1 7.5h11M5 1v10M8.5 1v10" fill="#fff" stroke="#7f7f7f" /><path d="M10 6h3v4h3l-4.5 4L7 10h3z" fill="#4a80bd" /><path d="M8 14.5h8" stroke="#4a80bd" strokeWidth="2" /></> },
    { label: 'Export report', art: <><path d="M2 1h9v10H2z" fill="#fff" stroke="#7f7f7f" /><path d="M4 4h5M4 6.5h5" stroke="#7f7f7f" strokeDasharray="2 1" /><path d="M10 6h3v4h3l-4.5 4L7 10h3z" fill="#4a80bd" /><path d="M8 14.5h8" stroke="#4a80bd" strokeWidth="2" /></> },
  ],
];

function DialogTools() {
  return (
    <div className="flex h-[38px] shrink-0 items-center pb-1">
      <div className="mr-[7px] h-6 w-[125px] border border-[#0f7a28] bg-[#1fa73e]" />
      {TOOLS.map((group, index) => (
        <React.Fragment key={index}>
          {group.map(({ label, art, pressed }) => (
            <button key={label} aria-label={label} aria-pressed={pressed} className={clsx('flex h-[23px] w-6 items-center justify-center', pressed && 'bg-[#b4b4b4]')}>
              <svg viewBox="0 0 17 16" className="h-4 w-[17px]" aria-hidden="true">{art}</svg>
            </button>
          ))}
          <span className="mx-[5px] h-3 border-l-2 border-[#d8d8d8]" />
        </React.Fragment>
      ))}
      <button aria-label="Help" className="flex h-6 w-6 items-center justify-center">
        <span className="flex size-3.5 items-center justify-center rounded-full bg-[#3a74b8] text-[12px] leading-none font-bold text-white">?</span>
      </button>
    </div>
  );
}

function Expander({ open }: { open?: boolean }) {
  return (
    <button aria-label={open ? 'Collapse' : 'Expand'} aria-expanded={Boolean(open)} className="mr-2 flex size-[22px] shrink-0 items-center justify-center border border-[#a0a0a0] bg-white">
      <svg viewBox="0 0 12 12" className="size-3" stroke="#a0a0a0"><path d={open ? 'M0 5.5h12' : 'M0 5.5h12M5.5 0v12'} /></svg>
    </button>
  );
}

function TreeRow({ level, tall, open, selected, icon, text }: { level: number; tall?: boolean; open?: boolean; selected?: boolean; icon: React.ReactNode; text: string }) {
  return (
    <tr>
      <td colSpan={4} className="p-0">
        <div
          className={clsx(
            'flex items-center border-b border-[#dcdcdc]',
            level === 0 && 'h-[39px] pl-[7px]',
            level === 1 && 'pl-11',
            level === 2 && 'pl-[82px]',
            level > 0 && (tall ? 'h-[38px]' : 'h-[37px]'),
          )}
        >
          <Expander open={open} />
          <div className={clsx('flex flex-1 items-center self-stretch pl-[37px]', selected && 'bg-[#0062c4] text-white')}>
            <span className="mr-[29px] flex w-4 justify-center">{icon}</span>
            <span className="pt-0.5">{text}</span>
          </div>
        </div>
      </td>
    </tr>
  );
}

const COLUMN_ICON = <svg viewBox="0 0 6 14" className="h-3.5 w-1.5"><rect x=".5" y=".5" width="5" height="13" fill="#ffc000" stroke="#7f7f7f" /></svg>;

function RangeTree() {
  const head = 'h-[25px] border-t border-r border-b border-[#a0a0a0] p-0 font-normal';
  return (
    <table className="w-full table-fixed border-separate border-spacing-0 text-[20px]">
      <colgroup>
        <col className="w-[326px]" />
        <col className="w-[288px]" />
        <col className="w-[288px]" />
        <col />
      </colgroup>
      <thead className="bg-[#f0f0f0]">
        <tr>
          {['Range', 'sales_plan_v1', 'sales_plan_v2'].map(title => (
            <th key={title} className={head}><div className="h-[23px] pl-1.5 leading-[25px]">{title}</div></th>
          ))}
          <th className={head} />
        </tr>
      </thead>
      <tbody className="bg-white">
        <TreeRow
          level={0}
          open
          text="Sales Plan: 216"
          icon={<svg viewBox="0 0 16 15" className="h-[15px] w-4" fill="#fff"><path d="M1.5 1.5h2v2h-2zM6.5 1.5h2v2h-2zM11.5 1.5h2v2h-2zM1.5 6.5h2v2h-2zM1.5 11.5h2v2h-2z" stroke="#000" /><path d="M6.5 6.5h2v2h-2zM11.5 6.5h2v2h-2zM6.5 11.5h2v2h-2zM11.5 11.5h2v2h-2z" stroke="#7f7f7f" /></svg>}
        />
        <tr>
          <td className="p-0">
            <label className="flex h-[37px] items-center border-r border-b border-[#dcdcdc] pl-[85px]">
              <input type="checkbox" className="mr-[14px] size-4 appearance-none border border-[#a0a0a0] bg-white" />
              <svg viewBox="0 0 8 14" className="mr-[34px] h-3.5 w-2" aria-hidden="true"><rect x="1" y="1" width="5" height="12" fill="#ff9aa5" stroke="#c80000" /></svg>
              <span className="pt-0.5">$F:$F</span>
            </label>
          </td>
          <td colSpan={3} className="p-0">
            <div className="flex h-[37px] items-center border-b border-[#dcdcdc] pt-0.5 pl-[45px]">1 column</div>
          </td>
        </tr>
        <TreeRow
          level={1}
          text="Unique Rows: 35 = (17 + 18)"
          icon={<svg viewBox="0 0 16 15" className="h-[15px] w-4" fill="none"><path d="M3 .5H.5v14H3M12 .5h2.5v14H12" stroke="#606060" /><path d="M3.5 2.5h8v3h-8z" fill="#92e07a" stroke="#606060" /><path d="M3.5 8.5h8v3h-8z" fill="#ffa2ad" stroke="#606060" /></svg>}
        />
        <TreeRow
          level={1}
          tall
          open
          selected
          text="Updated Cells: 178"
          icon={<svg viewBox="0 0 16 15" className="h-[15px] w-4" fill="none"><path d="M3 .5H.5v14H3M12 .5h2.5v14H12" stroke="#6b4a4a" /><path d="M3.5 3h3v3h-3zM9.5 3h3v3h-3zM3.5 9h3v3h-3zM9.5 9h3v3h-3z" fill="#ffe0a0" stroke="#e8641e" strokeWidth="1.6" /></svg>}
        />
        {UPDATED_COLUMNS.map((text, index) => <TreeRow key={text} level={2} tall={index % 2 === 1} icon={COLUMN_ICON} text={text} />)}
      </tbody>
    </table>
  );
}

function ChangesDialog() {
  return (
    <div role="dialog" aria-label="Changes" className="absolute top-[482px] left-[938px] flex h-[889px] w-[1320px] flex-col border border-[#8c8c8c] bg-[#f0f0f0] shadow-[0_6px_18px_rgba(0,0,0,0.4)]">
      <div className="flex h-[57px] shrink-0 items-center bg-white pr-[23px] pb-0.5 pl-[13px]">
        <Logo />
        <h2 className="ml-1.5 flex-1 text-[23px] text-[#999]">[sales_plan_v1] - [sales_plan_v2]</h2>
        <button aria-label="Close">
          <svg viewBox="0 0 20 20" className="size-5" fill="none" stroke="#909090" strokeWidth="1.8"><path d="M1 1l18 18M19 1L1 19" /></svg>
        </button>
      </div>
      <div role="tablist" className="flex h-12 shrink-0 border-b border-[#dadada] bg-white pl-7 text-[20px]">
        <button role="tab" aria-selected="true" className="-mb-px border border-b-0 border-[#dadada] bg-[#f0f0f0] px-[26px] text-[21px] font-bold">Sheets (216)</button>
        <button role="tab" aria-selected="false" className="px-[43px] text-[21px] font-bold">VBA Modules (5)</button>
        <button role="tab" aria-selected="false" className="px-8">Vba Forms</button>
      </div>
      <div className="flex min-h-0 flex-1 flex-col px-2 pb-2">
        <DialogTools />
        <div className="flex min-h-0 flex-1 border-r border-b border-l border-[#0062b8]">
          <div className="min-w-0 flex-1 overflow-hidden bg-white"><RangeTree /></div>
          <div className="flex w-[19px] shrink-0 flex-col items-center border-t border-[#0062b8] pt-7 pb-1">
            <Triangle dir="up" />
            <div className="mt-1 h-[335px] w-[19px] bg-[#cdcdcd]" />
            <div className="mt-auto flex"><Triangle dir="down" /></div>
          </div>
        </div>
      </div>
    </div>
  );
}

export default function App() {
  return (
    <div className="relative flex h-screen flex-col overflow-hidden bg-[#f0f0f0] font-['Open_Sans','Noto_Sans',sans-serif] text-black">
      <TitleBar />
      <MenuBar />
      <Ribbon />
      <main className="flex min-h-0 flex-1">
        <Pane side="left" rows={LEFT_ROWS} path="C:\Users\Felix\Desktop\sales_plan_v1.xlsm" value="Item 4" />
        <div className="mb-2 w-[13px] bg-[repeating-linear-gradient(135deg,#c0c0c0_0_1px,#f0f0f0_1px_3px)]" />
        <Pane side="right" rows={RIGHT_ROWS} path="C:\Users\Felix\Desktop\sales_plan_v2.xlsm" value="" />
      </main>
      <ChangesDialog />
    </div>
  );
}
